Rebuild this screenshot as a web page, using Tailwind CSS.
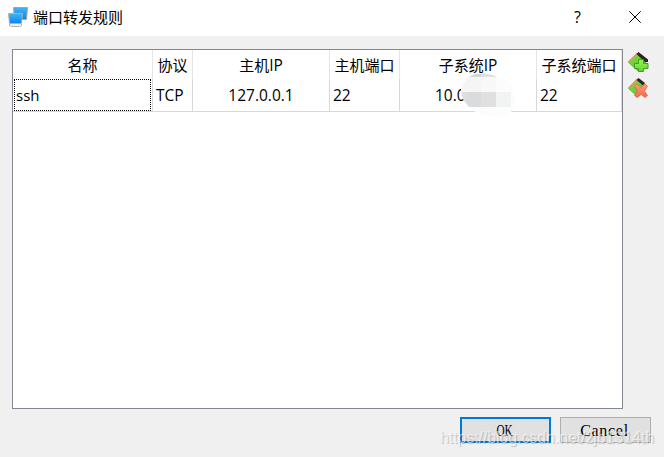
<!DOCTYPE html>
<html lang="zh-CN">
  <head>
    <meta charset="UTF-8">
    <meta name="viewport" content="width=device-width, initial-scale=1.0">
    <title>端口转发规则</title>
    <script src="https://cdn.jsdelivr.net/npm/@tailwindcss/browser@4"></script>
  </head>
  <body class="relative flex h-[457px] w-[664px] flex-col overflow-hidden bg-[#f0f0f0] font-['Open_Sans','Noto_Sans_CJK_SC',sans-serif] text-[15px] leading-5 text-black">
    <!-- title bar -->
    <header class="flex h-9 shrink-0 items-center bg-white pl-2">
      <svg class="-mt-0.5 h-5 w-5 shrink-0" viewBox="0 0 20 20">
        <defs>
          <linearGradient id="screen" x1="0" y1="0" x2="0" y2="1">
            <stop offset="0" stop-color="#45b4f5"/>
            <stop offset="1" stop-color="#0784ef"/>
          </linearGradient>
        </defs>
        <path d="M5.5 .5h14l-1 12h-12z" fill="url(#screen)" stroke="#aaa5a0"/>
        <path d="M.5 6.5h14l-1 10h-12z" fill="url(#screen)" stroke="#b5b0aa"/>
        <path d="M1.5 16.5h12v2l-2 1h-8l-2-1z" fill="#eee" stroke="#b5b0aa"/>
      </svg>
      <h1 class="ml-[5px] -mt-[3px] grow">端口转发规则</h1>
      <button class="-mt-0.5 w-[57px] text-base">?</button>
      <button class="mr-px flex w-[57px] justify-center">
        <svg class="h-3 w-3 -mt-0.5" viewBox="0 0 12 12" stroke="#000">
          <path d="M.3 .3l11.4 11.4M11.7 .3L.3 11.7"/>
        </svg>
      </button>
    </header>

    <main class="mt-[13px] ml-3 flex">
      <div class="h-[360px] w-[611px] border border-[#828790] bg-white">
        <div class="relative grid grid-cols-[140px_40px_137px_70px_137px_85px] border-b border-[#d8d8d8]">
          <div class="h-[29px] border-r border-[#e5e5e5] pt-[5px] text-center">名称</div>
          <div class="h-[29px] border-r border-[#e5e5e5] pt-[5px] text-center">协议</div>
          <div class="h-[29px] border-r border-[#e5e5e5] pt-[5px] text-center">主机<span class="text-[15.5px]">IP</span></div>
          <div class="h-[29px] border-r border-[#e5e5e5] pt-[5px] text-center">主机端口</div>
          <div class="h-[29px] border-r border-[#e5e5e5] pt-[5px] text-center">子系统<span class="text-[15.5px]">IP</span></div>
          <div class="h-[29px] border-r border-[#e5e5e5] pt-[5px] text-center">子系统端口</div>

          <div class="h-8 border-r border-[#d8d8d8] pl-px">
            <div class="h-8 w-[137px] border border-dotted border-black pt-[5px] pl-px">ssh</div>
          </div>
          <div class="h-8 border-r border-[#d8d8d8] pt-1.5 pl-[3px] text-[15.5px]">TCP</div>
          <div class="h-8 border-r border-[#d8d8d8] pt-1.5 text-center text-[15.5px]">127.0.0.1</div>
          <div class="h-8 border-r border-[#d8d8d8] pt-1.5 pl-[3px] text-[15.5px]">22</div>
          <div class="h-8 border-r border-[#d8d8d8] pt-1.5 pl-[35px] text-[15.5px]">10.0</div>
          <div class="h-8 border-r border-[#d8d8d8] pt-1.5 pl-[3px] text-[15.5px]">22</div>

          <!-- mosaic over the guest address -->
          <svg class="absolute top-[23px] left-[448px] h-[44px] w-[56px]" viewBox="0 0 56 44">
            <defs>
              <clipPath id="smudge">
                <path d="M0 17Q3 5 14 1Q28-1 36 4Q49 5 52 18Q55 29 51 38Q45 43 30 43Q16 42 11 36Q1 30 0 17z"/>
              </clipPath>
            </defs>
            <g clip-path="url(#smudge)">
              <path fill="#fcfcfc" d="M0 0h56v44H0z"/>
              <path fill="#d3d5d6" d="M6 0h14v4H6z"/>
              <path fill="#dfe0e1" d="M20 0h15v4H20z"/>
              <path fill="#f5f5f5" d="M0 4h20v15H0z"/>
              <path fill="#f8f8f8" d="M20 4h15v15H20z"/>
              <path fill="#dedee0" d="M0 19h6v15H0z"/>
              <path fill="#dadbdd" d="M6 19h14v15H6z"/>
              <path fill="#e0e0e0" d="M20 19h15v15H20z"/>
              <path fill="#f2f4f4" d="M35 19h15v15H35z"/>
            </g>
          </svg>
        </div>
      </div>

      <!-- add / remove rule -->
      <div class="ml-[5px] mt-[3px] flex flex-col gap-1.5">
        <svg class="h-5 w-[21px]" viewBox="0 0 21 20">
          <defs>
            <linearGradient id="card" x1="0" y1="0" x2="1" y2="1">
              <stop offset="0" stop-color="#86e040"/>
              <stop offset="1" stop-color="#55bb2a"/>
            </linearGradient>
            <linearGradient id="plus" x1="0" y1="0" x2="0" y2="1">
              <stop offset="0" stop-color="#9cf25a"/>
              <stop offset="1" stop-color="#62d82e"/>
            </linearGradient>
            <linearGradient id="cross" x1="0" y1="0" x2="0" y2="1">
              <stop offset="0" stop-color="#ff9c7e"/>
              <stop offset="1" stop-color="#f4694a"/>
            </linearGradient>
          </defs>
          <path d="M.5 10.5L9.5 1.5L18 10L10 19z" fill="url(#card)" stroke="#62ae38" stroke-width=".8"/>
          <path d="M.5 10L9.5 1" stroke="#e69065" stroke-width="1.2"/>
          <path d="M8.5 2L10.5 0L20 7.5V10L17 10z" fill="#252525"/>
          <path d="M10.5 7.5h5v4h4.500v5h-4.500v3h-5v-3h-4v-5h4z" fill="url(#plus)" stroke="#3f9f20"/>
        </svg>
        <svg class="h-5 w-[21px]" viewBox="0 0 21 20">
          <path d="M.5 10.5L9.5 1.5L18 10L10 19z" fill="url(#card)" stroke="#62ae38" stroke-width=".8"/>
          <path d="M.5 10L9.5 1" stroke="#e69065" stroke-width="1.2"/>
          <path d="M8.5 2L10.5 0L17 5L15 7.5z" fill="#252525"/>
          <path d="M6.5 8L9 6L13 9.5L17 6L19.5 8L16.5 13L19.5 17.5L17 19.500L13 16.5L9 19.500L6.500 17.5L9.500 13z" fill="url(#cross)" stroke="#df6749" stroke-width=".8" stroke-linejoin="round"/>
        </svg>
      </div>
    </main>

    <footer class="mt-2 ml-[460px] flex gap-[9px] font-['Liberation_Serif',serif] text-base">
      <button class="h-[26px] w-[91px] border-2 border-[#0078d7] bg-[#e1e1e1] pr-0.5"><span class="inline-block origin-center scale-x-[0.7]">OK</span></button>
      <button class="h-[26px] w-[91px] border border-[#adadad] bg-[#e1e1e1] pt-px pr-0.5 tracking-[0.7px]">Cancel</button>
    </footer>

    <div class="pointer-events-none absolute top-[428px] left-[440px] font-['Liberation_Sans',sans-serif] text-base leading-5 tracking-[-0.1px] whitespace-nowrap text-white/60 [text-shadow:1px_1px_1px_rgba(0,0,0,0.2)]">https://blog.csdn.net/zjb1314th</div>
  </body>
</html>
